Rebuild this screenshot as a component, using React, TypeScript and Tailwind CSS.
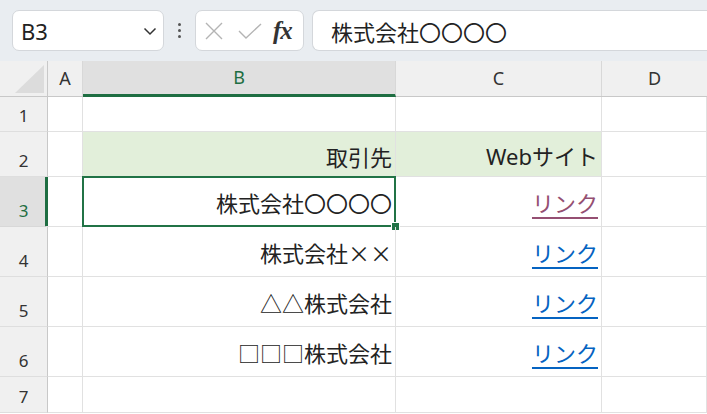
import React from "react";

const font = { fontFamily: '"Noto Sans", "Noto Sans CJK JP", sans-serif' };
const cjk = { fontFamily: '"Noto Sans CJK JP", "Noto Sans", sans-serif' };

type Row = {
  n: number;
  h: string;
  pb: string;
  b?: string;
  c?: string;
  fill?: boolean;
  visited?: boolean;
  sel?: boolean;
};

const rows: Row[] = [
  { n: 1, h: "h-[35px]", pb: "pb-[12px]" },
  { n: 2, h: "h-[45px]", pb: "pb-[9px]", b: "取引先", c: "Webサイト", fill: true },
  { n: 3, h: "h-[50px]", pb: "pb-[13px]", b: "株式会社〇〇〇〇", c: "リンク", visited: true, sel: true },
  { n: 4, h: "h-[50px]", pb: "pb-[13px]", b: "株式会社××", c: "リンク" },
  { n: 5, h: "h-[50px]", pb: "pb-[13px]", b: "△△株式会社", c: "リンク" },
  { n: 6, h: "h-[50px]", pb: "pb-[13px]", b: "□□□株式会社", c: "リンク" },
  { n: 7, h: "h-[36px]", pb: "pb-[12px]" },
];

export default function App() {
  return (
    <div className="w-[707px] h-[414px] overflow-hidden bg-white" style={font}>
      {/* Top bar */}
      <div className="h-[61px] bg-[#e9edf1] flex items-center pl-[12px] gap-0">
        <div className="w-[152px] h-[41px] bg-white rounded-[7px] border border-[#d4d7db] flex items-center justify-between pl-[8px] pr-[6px]">
          <span className="text-[22px] text-[#222] leading-none">B3</span>
          <svg width="14" height="10" viewBox="0 0 14 10">
            <path d="M1.5 2.5 L7 8 L12.5 2.5" fill="none" stroke="#333" strokeWidth="1.5" />
          </svg>
        </div>
        <div className="w-[31px] flex flex-col items-center justify-center gap-[3px]">
          <div className="w-[3px] h-[3px] rounded-full bg-[#555]" />
          <div className="w-[3px] h-[3px] rounded-full bg-[#555]" />
          <div className="w-[3px] h-[3px] rounded-full bg-[#555]" />
        </div>
        <div className="w-[109px] h-[41px] bg-white rounded-[7px] border border-[#d4d7db] flex items-center pl-[8px]">
          <svg width="20" height="20" viewBox="0 0 20 20">
            <path d="M2 2 L18 18 M18 2 L2 18" stroke="#b4b4b4" strokeWidth="1.4" />
          </svg>
          <svg width="26" height="20" viewBox="0 0 26 20" className="ml-[13px]">
            <path d="M2 10 L9 17 L24 3" fill="none" stroke="#b4b4b4" strokeWidth="1.4" />
          </svg>
          <span
            className="ml-[10px] text-[25px] italic font-bold text-[#333] leading-none tracking-[-1px]"
            style={{ fontFamily: '"Liberation Serif", serif' }}
          >
            fx
          </span>
        </div>
        <div className="ml-[8px] flex-1 h-[41px] bg-white rounded-l-[7px] border border-r-0 border-[#d4d7db] flex items-center pl-[18px]">
          <span className="text-[22px] text-[#222] leading-none" style={cjk}>株式会社〇〇〇〇</span>
        </div>
      </div>

      {/* Column header */}
      <div className="flex h-[36px] bg-[#f0f0f0] border-b border-[#c8c8c8]">
        <div className="w-[48px] border-r border-[#c8c8c8] relative">
          <svg width="30" height="29" viewBox="0 0 30 29" className="absolute left-[15px] top-[4px]">
            <polygon points="29,0 29,28 0,28" fill="#dcdcdc" />
          </svg>
        </div>
        <div className="w-[35px] border-r border-[#d8d8d8] flex items-center justify-center text-[18px] text-[#333]">
          A
        </div>
        <div className="w-[313px] bg-[#e0e0e0] border-b-[3px] border-[#1e6e42] -mb-[1px] border-r border-r-[#d8d8d8] flex items-center justify-center text-[18px] text-[#1e6e42]">
          B
        </div>
        <div className="w-[206px] border-r border-[#d8d8d8] flex items-center justify-center text-[18px] text-[#333]">
          C
        </div>
        <div className="flex-1 flex items-center justify-center text-[18px] text-[#333]">D</div>
      </div>

      {/* Rows */}
      {rows.map((r) => (
        <div key={r.n} className={`flex ${r.h}`}>
          <div
            className={`w-[48px] flex items-end justify-center pb-[7px] text-[17px] leading-none ${
              r.sel
                ? "bg-[#e0e0e0] text-[#1e6e42] border-r-[3px] border-r-[#1e6e42] border-b border-b-[#d8d8d8]"
                : "bg-[#f0f0f0] text-[#333] border-r border-r-[#c8c8c8] border-b border-b-[#dedede]"
            }`}
          >
            <span className={r.sel ? "ml-[2px]" : ""}>{r.n}</span>
          </div>
          <div className={`w-[35px] border-r border-b border-[#e1e1e1] ${r.sel ? "-ml-[2px] w-[37px]" : ""}`} />
          <div
            className={`w-[313px] border-r border-b border-[#e1e1e1] flex items-end justify-end pr-[3px] ${r.pb} text-[22px] leading-none text-[#222] relative ${
              r.fill ? "bg-[#e2efda]" : ""
            }`}
            style={cjk}
          >
            {r.sel && (
              <>
                <div className="absolute -left-[1px] -top-[1px] -right-[1px] -bottom-[1px] border-2 border-[#217346]" />
                <div className="absolute -right-[4px] -bottom-[4px] w-[7px] h-[7px] bg-[#217346] outline outline-1 outline-white" />
              </>
            )}
            {r.b}
          </div>
          <div
            className={`w-[206px] border-r border-b border-[#e1e1e1] flex items-end justify-end pr-[3px] ${r.pb} text-[22px] leading-none ${
              r.fill ? "bg-[#e2efda] text-[#222]" : ""
            }`}
          >
            {r.c && !r.fill ? (
              <span
                className={`underline underline-offset-[5px] decoration-[1.5px] ${
                  r.visited ? "text-[#954f72]" : "text-[#0563c1]"
                }`}
                style={cjk}
              >
                {r.c}
              </span>
            ) : (
              r.c
            )}
          </div>
          <div className="flex-1 border-r border-b border-[#e1e1e1]" />
        </div>
      ))}
    </div>
  );
}
